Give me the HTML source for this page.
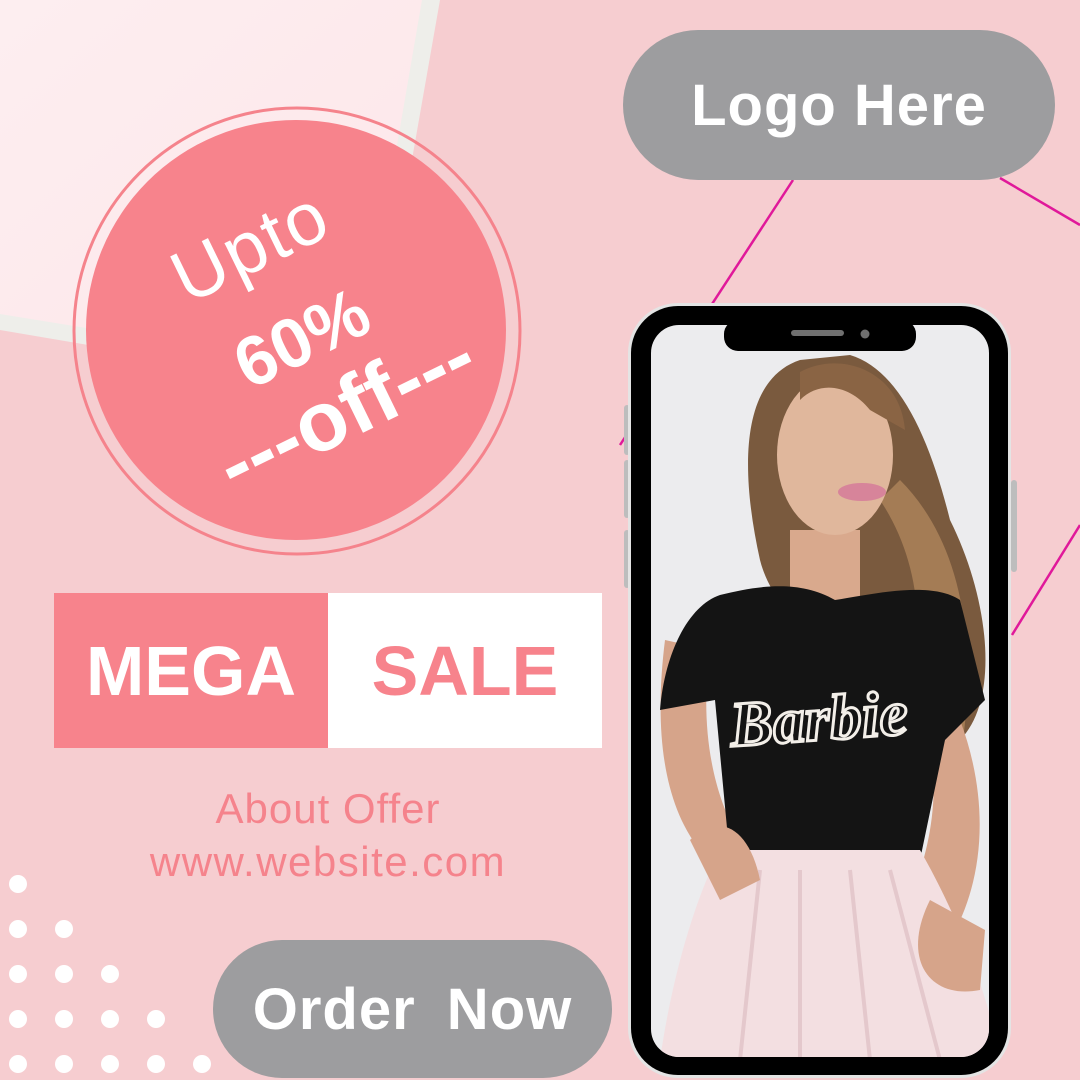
<!DOCTYPE html>
<html><head><meta charset="utf-8"><style>
html,body{margin:0;padding:0}
body{width:1080px;height:1080px;position:relative;overflow:hidden;background:#f6cdd0;font-family:"Liberation Sans","DejaVu Sans",sans-serif}
.abs{position:absolute}
.pill{position:absolute;background:#9d9d9f;color:#fff;font-weight:bold;display:flex;align-items:center;justify-content:center}
.dot{position:absolute;width:18px;height:18px;border-radius:50%;background:#fff}
</style></head><body>
<svg class="abs" style="left:0;top:0" width="1080" height="1080">
  <defs>
    <linearGradient id="pg" x1="0" y1="0" x2="1" y2="1">
      <stop offset="0" stop-color="#fdeef0"/><stop offset="1" stop-color="#fde6e9"/>
    </linearGradient>
  </defs>
  <polygon points="0,0 440,0 371,393 0,330" fill="#eeeeea"/>
  <polygon points="0,0 422,0 358,372 0,314" fill="url(#pg)"/>
  <line x1="793" y1="180" x2="620" y2="445" stroke="#e0199a" stroke-width="2.5"/>
  <line x1="1000" y1="178" x2="1080" y2="225" stroke="#e0199a" stroke-width="2.5"/>
  <line x1="1080" y1="525" x2="1012" y2="635" stroke="#e0199a" stroke-width="2.5"/>
  <circle cx="297" cy="331" r="223" fill="none" stroke="#f5838c" stroke-width="3"/>
  <circle cx="296" cy="330" r="210" fill="#f7838c"/>
  <g transform="translate(300,330) rotate(-26)" fill="#fff" text-anchor="middle" font-family="Liberation Sans, sans-serif">
    <text x="-8" y="-72" font-size="74" letter-spacing="2">Upto</text>
    <text x="-2" y="32" font-size="70" font-weight="bold">60%</text>
    <text x="6" y="120" font-size="84" font-weight="bold">---off---</text>
  </g>
  <!-- phone -->
  <rect x="624" y="405" width="6" height="50" rx="3" fill="#bdbdbd"/>
  <rect x="624" y="460" width="6" height="58" rx="3" fill="#bdbdbd"/>
  <rect x="624" y="530" width="6" height="58" rx="3" fill="#bdbdbd"/>
  <rect x="1011" y="480" width="6" height="92" rx="3" fill="#bdbdbd"/>
  <rect x="628" y="303" width="383" height="775" rx="50" fill="#e4e4e4"/>
  <rect x="631" y="306" width="377" height="769" rx="47" fill="#000"/>
  <clipPath id="scr"><rect x="651" y="325" width="338" height="732" rx="28"/></clipPath>
  <g clip-path="url(#scr)">
    <rect x="651" y="325" width="338" height="732" fill="#ececee"/>
    <path d="M800 360 C740 380 740 470 760 560 C780 640 900 700 960 740 C1000 700 990 600 950 520 C930 440 900 370 850 355 Z" fill="#7a5a3e"/>
    <path d="M900 480 C960 540 980 640 960 760 L900 720 C930 640 920 560 880 500 Z" fill="#a47c55"/>
    <rect x="790" y="530" width="70" height="80" fill="#d9a98d"/>
    <ellipse cx="835" cy="455" rx="58" ry="80" fill="#e0b79c"/>
    <path d="M800 372 C840 350 900 370 905 430 L870 410 C850 385 820 380 800 400 Z" fill="#8a6444"/>
    <ellipse cx="862" cy="492" rx="24" ry="9" fill="#d7849a"/>
    <path d="M665 640 C655 720 660 800 700 850 L740 840 C710 790 700 720 710 650 Z" fill="#d6a48a"/>
    <path d="M960 720 C990 800 985 880 950 940 L900 920 C930 860 940 800 930 740 Z" fill="#d6a48a"/>
    <path d="M720 595 C760 585 800 580 835 600 C870 595 930 580 960 600 L985 700 L945 740 L920 860 L730 860 L715 700 L660 710 C665 650 690 605 720 595 Z" fill="#141414"/>
    <text x="730" y="740" font-family="Liberation Serif, serif" font-style="italic" font-size="64" font-weight="bold" fill="none" stroke="#f3efe9" stroke-width="3" transform="rotate(-4 820 720)">Barbie</text>
    <path d="M720 850 L920 850 C960 920 990 1000 1000 1060 L660 1060 C670 990 690 910 720 850 Z" fill="#f3dfe1"/>
    <path d="M760 870 L740 1060 M800 870 L800 1060 M850 870 L870 1060 M890 870 L940 1060" stroke="#e4c8cc" stroke-width="4"/>
    <path d="M690 840 C720 810 750 830 760 880 L720 900 Z" fill="#d6a48a"/>
    <path d="M930 900 C900 960 930 1000 980 990 L985 930 Z" fill="#d6a48a"/>
  </g>
  <rect x="724" y="320" width="192" height="31" rx="14" fill="#000"/>
  <rect x="791" y="330" width="53" height="6" rx="3" fill="#707070"/>
  <circle cx="865" cy="334" r="4.5" fill="#707070"/>
</svg>

<div class="pill" style="left:623px;top:30px;width:432px;height:150px;border-radius:75px;font-size:58px;letter-spacing:1px">Logo Here</div>

<div class="abs" style="left:54px;top:593px;width:274px;height:155px;background:#f7838c;color:#fff;font-weight:bold;font-size:70px;display:flex;align-items:center;justify-content:center">MEGA</div>
<div class="abs" style="left:328px;top:593px;width:274px;height:155px;background:#fff;color:#f7838c;font-weight:bold;font-size:70px;display:flex;align-items:center;justify-content:center">SALE</div>

<div class="abs" style="left:78px;top:784px;width:500px;text-align:center;color:#f5838c;font-size:42px;line-height:50px;letter-spacing:1px">About Offer</div>
<div class="abs" style="left:58px;top:837px;width:540px;text-align:center;color:#f5838c;font-size:42px;line-height:50px;letter-spacing:1.5px">www.website.com</div>

<div class="pill" style="left:213px;top:940px;width:399px;height:138px;border-radius:69px;font-size:58px;word-spacing:14px;letter-spacing:1px">Order Now</div>

<div class="dot" style="left:9px;top:875px"></div>
<div class="dot" style="left:9px;top:920px"></div><div class="dot" style="left:55px;top:920px"></div>
<div class="dot" style="left:9px;top:965px"></div><div class="dot" style="left:55px;top:965px"></div><div class="dot" style="left:101px;top:965px"></div>
<div class="dot" style="left:9px;top:1010px"></div><div class="dot" style="left:55px;top:1010px"></div><div class="dot" style="left:101px;top:1010px"></div><div class="dot" style="left:147px;top:1010px"></div>
<div class="dot" style="left:9px;top:1055px"></div><div class="dot" style="left:55px;top:1055px"></div><div class="dot" style="left:101px;top:1055px"></div><div class="dot" style="left:147px;top:1055px"></div><div class="dot" style="left:193px;top:1055px"></div>
</body></html>
